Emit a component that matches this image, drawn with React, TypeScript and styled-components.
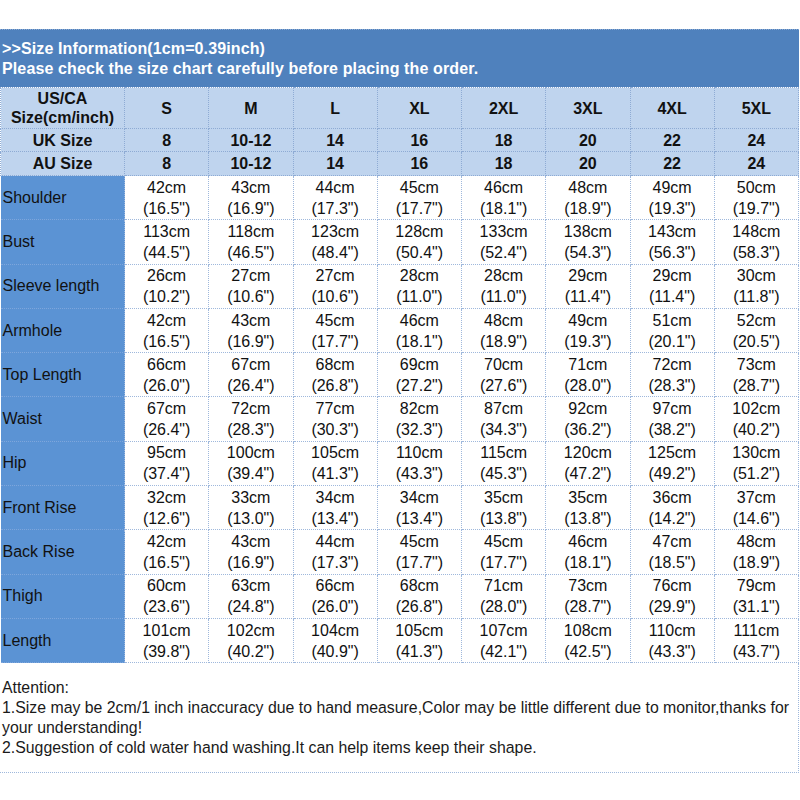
import React from 'react';
import styled, { createGlobalStyle } from 'styled-components';

const GlobalStyle = createGlobalStyle`
  html, body {
    margin: 0;
    padding: 0;
    background: #ffffff;
  }
  body {
    font-family: 'Liberation Sans', Arial, sans-serif;
    color: #111;
  }
`;

const sizes = ['S', 'M', 'L', 'XL', '2XL', '3XL', '4XL', '5XL'];
const ukSizes = ['8', '10-12', '14', '16', '18', '20', '22', '24'];
const auSizes = ['8', '10-12', '14', '16', '18', '20', '22', '24'];

// cm values per measurement; inches shown underneath
const rows: { name: string; cm: number[]; inch: string[] }[] = [
  { name: 'Shoulder', cm: [42, 43, 44, 45, 46, 48, 49, 50], inch: ['16.5', '16.9', '17.3', '17.7', '18.1', '18.9', '19.3', '19.7'] },
  { name: 'Bust', cm: [113, 118, 123, 128, 133, 138, 143, 148], inch: ['44.5', '46.5', '48.4', '50.4', '52.4', '54.3', '56.3', '58.3'] },
  { name: 'Sleeve length', cm: [26, 27, 27, 28, 28, 29, 29, 30], inch: ['10.2', '10.6', '10.6', '11.0', '11.0', '11.4', '11.4', '11.8'] },
  { name: 'Armhole', cm: [42, 43, 45, 46, 48, 49, 51, 52], inch: ['16.5', '16.9', '17.7', '18.1', '18.9', '19.3', '20.1', '20.5'] },
  { name: 'Top Length', cm: [66, 67, 68, 69, 70, 71, 72, 73], inch: ['26.0', '26.4', '26.8', '27.2', '27.6', '28.0', '28.3', '28.7'] },
  { name: 'Waist', cm: [67, 72, 77, 82, 87, 92, 97, 102], inch: ['26.4', '28.3', '30.3', '32.3', '34.3', '36.2', '38.2', '40.2'] },
  { name: 'Hip', cm: [95, 100, 105, 110, 115, 120, 125, 130], inch: ['37.4', '39.4', '41.3', '43.3', '45.3', '47.2', '49.2', '51.2'] },
  { name: 'Front Rise', cm: [32, 33, 34, 34, 35, 35, 36, 37], inch: ['12.6', '13.0', '13.4', '13.4', '13.8', '13.8', '14.2', '14.6'] },
  { name: 'Back Rise', cm: [42, 43, 44, 45, 45, 46, 47, 48], inch: ['16.5', '16.9', '17.3', '17.7', '17.7', '18.1', '18.5', '18.9'] },
  { name: 'Thigh', cm: [60, 63, 66, 68, 71, 73, 76, 79], inch: ['23.6', '24.8', '26.0', '26.8', '28.0', '28.7', '29.9', '31.1'] },
  { name: 'Length', cm: [101, 102, 104, 105, 107, 108, 110, 111], inch: ['39.8', '40.2', '40.9', '41.3', '42.1', '42.5', '43.3', '43.7'] },
];

const SizeChart = () => {
  return (
    <Page>
      <GlobalStyle />
      <TitleBar>
        <TitleLine>&gt;&gt;Size Information(1cm=0.39inch)</TitleLine>
        <TitleLine>Please check the size chart carefully before placing the order.</TitleLine>
      </TitleBar>
      <Table>
        <colgroup>
          <col style={{ width: 124 }} />
          {sizes.map((s) => (
            <col key={s} />
          ))}
        </colgroup>
        <tbody>
          <HeadRow height={41}>
            <HeadCell>
              US/CA
              <br />
              Size(cm/inch)
            </HeadCell>
            {sizes.map((s) => (
              <HeadCell key={s}>{s}</HeadCell>
            ))}
          </HeadRow>
          <HeadRow height={23}>
            <HeadCell>UK Size</HeadCell>
            {ukSizes.map((s, i) => (
              <HeadCell key={i}>{s}</HeadCell>
            ))}
          </HeadRow>
          <HeadRow height={24}>
            <HeadCell>AU Size</HeadCell>
            {auSizes.map((s, i) => (
              <HeadCell key={i}>{s}</HeadCell>
            ))}
          </HeadRow>
          {rows.map((row) => (
            <DataRow key={row.name}>
              <LabelCell>{row.name}</LabelCell>
              {row.cm.map((cm, i) => (
                <ValueCell key={i}>
                  {cm}cm
                  <br />({row.inch[i]}")
                </ValueCell>
              ))}
            </DataRow>
          ))}
        </tbody>
      </Table>
      <Notes>
        <NoteLine>Attention:</NoteLine>
        <NoteLine>
          1.Size may be 2cm/1 inch inaccuracy due to hand measure,Color may be little different due to monitor,thanks for
          your understanding!
        </NoteLine>
        <NoteLine>2.Suggestion of cold water hand washing.It can help items keep their shape.</NoteLine>
      </Notes>
    </Page>
  );
};

const Page = styled.div`
  width: 799px;
  padding-top: 29px;
`;

const TitleBar = styled.div`
  background: #4f81bd;
  height: 58px;
  box-sizing: border-box;
  padding: 9px 2px 0;
  border-top: 1px dotted #8aa9d2;
`;

const TitleLine = styled.div`
  color: #ffffff;
  font-weight: bold;
  font-size: 16px;
  line-height: 20px;
  letter-spacing: 0.12px;
  white-space: nowrap;
`;

const Table = styled.table`
  width: 799px;
  table-layout: fixed;
  border-collapse: collapse;
  font-family: 'Liberation Sans', Arial, sans-serif;
`;

const HeadRow = styled.tr<{ height: number }>`
  height: ${(p) => p.height}px;
  background: #bfd4ee;
`;

const HeadCell = styled.td`
  padding: 0;
  text-align: center;
  font-weight: bold;
  font-size: 16px;
  line-height: 19px;
  color: #111;
  border: 1px dotted #8eabd4;
`;

const DataRow = styled.tr`
  height: 44.3px;
`;

const LabelCell = styled.td`
  padding: 0 0 0 2px;
  background: #5b93d4;
  color: #111;
  font-size: 16px;
  text-align: left;
  border-bottom: 1px dotted #7ea6dc;
  border-top: 1px dotted #7ea6dc;
`;

const ValueCell = styled.td`
  padding: 0;
  text-align: center;
  font-size: 16px;
  line-height: 21px;
  color: #111;
  border: 1px dotted #9fb8dc;
`;

const Notes = styled.div`
  padding: 15px 0 14px 2px;
  border-right: 1px dotted #9fb8dc;
  border-bottom: 1px dotted #9fb8dc;
`;

const NoteLine = styled.div`
  font-size: 15.85px;
  line-height: 20px;
  color: #1a1a1a;
`;

export default SizeChart;
